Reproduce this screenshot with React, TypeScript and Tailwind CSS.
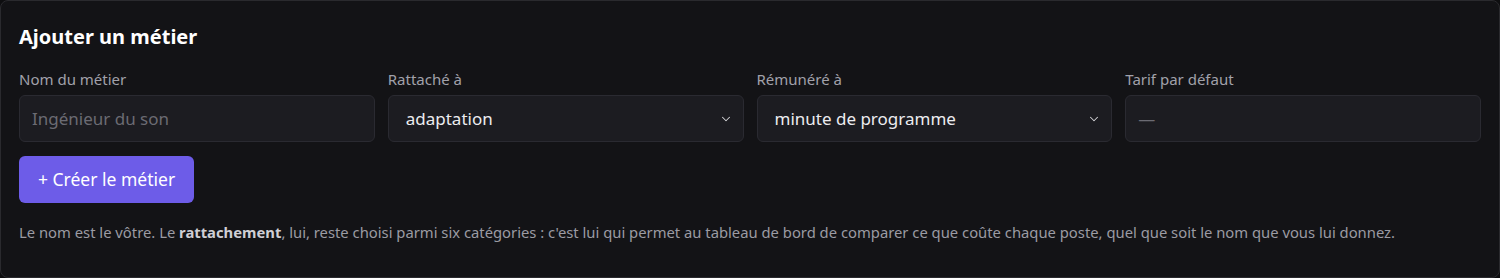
import { ChevronDown } from "lucide-react";

const field =
  "h-[47px] w-full rounded-md border border-[#2a2a31] bg-[#1c1c21] px-3 text-[17px] outline-none";

function Label({ children }: { children: React.ReactNode }) {
  return <label className="mb-[6px] block text-[15px] leading-[20px] text-[#a1a1aa]">{children}</label>;
}

function SelectBox({ value }: { value: string }) {
  return (
    <div className="relative">
      <div className={`${field} flex items-center pl-[17px] text-[#ececf0]`}>{value}</div>
      <ChevronDown
        className="pointer-events-none absolute right-[11px] top-1/2 -translate-y-1/2 text-[#d4d4d8]"
        size={14}
        strokeWidth={1.75}
      />
    </div>
  );
}

export default function App() {
  return (
    <div
      className="h-[278px] w-[1500px] bg-[#0e0e10]"
      style={{ fontFamily: '"Noto Sans", "Open Sans", sans-serif' }}
    >
      <div className="h-full rounded-lg border border-[#2a2a2e] bg-[#131316] px-[18px] pt-[22px]">
        <h2 className="text-[20px] font-bold leading-[28px] text-white">Ajouter un métier</h2>

        <div className="mt-[18px] grid grid-cols-4 gap-[13px]">
          <div>
            <Label>Nom du métier</Label>
            <input className={`${field} text-[#e5e5e5] placeholder:text-[#6b6b73]`} placeholder="Ingénieur du son" />
          </div>
          <div>
            <Label>Rattaché à</Label>
            <SelectBox value="adaptation" />
          </div>
          <div>
            <Label>Rémunéré à</Label>
            <SelectBox value="minute de programme" />
          </div>
          <div>
            <Label>Tarif par défaut</Label>
            <input className={`${field} text-[#e5e5e5] placeholder:text-[#6b6b73]`} placeholder="—" />
          </div>
        </div>

        <button className="mt-[14px] h-[47px] rounded-md bg-[#6d5ce8] px-[19px] text-[17.5px] text-white">
          + Créer le métier
        </button>

        <p className="mt-[19px] text-[14.8px] leading-[20px] text-[#9b9ba3]">
          Le nom est le vôtre. Le <strong className="font-bold text-[#cfcfd5]">rattachement</strong>, lui, reste
          choisi parmi six catégories : c'est lui qui permet au tableau de bord de comparer ce que coûte chaque
          poste, quel que soit le nom que vous lui donnez.
        </p>
      </div>
    </div>
  );
}
